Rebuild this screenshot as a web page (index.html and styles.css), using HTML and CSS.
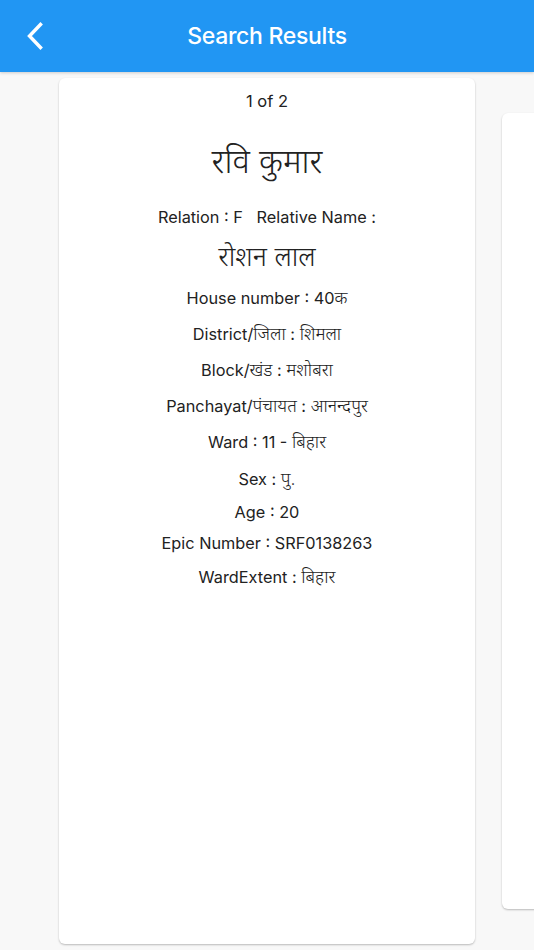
FILE: index.html
```html
<!DOCTYPE html>
<html lang="hi">
<head>
<meta charset="utf-8">
<title>Search Results</title>
<link rel="stylesheet" href="styles.css">
</head>
<body>
<header class="appbar">
  <button class="back" aria-label="Back">
    <svg width="18" height="28" viewBox="0 0 18 28"><path d="M14.5 2.5 L3.5 14 L14.5 25.5" fill="none" stroke="#fff" stroke-width="3.4" stroke-linecap="square" stroke-linejoin="miter"/></svg>
  </button>
  <h1 class="title">Search Results</h1>
</header>
<main class="carousel">
  <section class="card">
    <div class="count">1 of 2</div>
    <div class="name">रवि कुमार</div>
    <div class="row rel">Relation : F &nbsp; Relative Name :</div>
    <div class="relname">रोशन लाल</div>
    <div class="row">House number : 40<span class="hi">क</span></div>
    <div class="row">District/<span class="hi">जिला</span> : <span class="hi">शिमला</span></div>
    <div class="row">Block/<span class="hi">खंड</span> : <span class="hi">मशोबरा</span></div>
    <div class="row">Panchayat/<span class="hi">पंचायत</span> : <span class="hi">आनन्दपुर</span></div>
    <div class="row">Ward : 11 - <span class="hi">बिहार</span></div>
    <div class="row sex">Sex : <span class="hi">पु.</span></div>
    <div class="row age">Age : 20</div>
    <div class="row epic">Epic Number : SRF0138263</div>
    <div class="row ext">WardExtent : <span class="hi">बिहार</span></div>
  </section>
  <section class="card next"></section>
</main>
</body>
</html>
```
FILE: styles.css
```css
html, body {
  margin: 0;
  padding: 0;
}
body {
  width: 534px;
  height: 950px;
  overflow: hidden;
  background: #f8f8f8;
  font-family: Inter, "Noto Sans", "Noto Sans Devanagari", sans-serif;
  color: #222;
}
.appbar {
  height: 72px;
  background: #2196f3;
  display: flex;
  align-items: center;
  justify-content: center;
  position: relative;
  box-shadow: 0 1px 3px rgba(0,0,0,0.18);
  z-index: 2;
}
.back {
  position: absolute;
  left: 26px;
  top: 22px;
  background: none;
  border: 0;
  padding: 0;
  width: 18px;
  height: 28px;
}
.title {
  margin: 0;
  color: #fff;
  font-size: 23px;
  font-weight: 500;
  letter-spacing: -0.3px;
}
.carousel {
  display: flex;
  align-items: center;
  gap: 27px;
  padding: 6px 0 6px 59px;
  height: 866px;
  overflow: hidden;
}
.card {
  flex: 0 0 416px;
  height: 866px;
  background: #fff;
  border-radius: 6px;
  box-shadow: 0 1px 2px rgba(0,0,0,0.25);
  display: flex;
  flex-direction: column;
  align-items: center;
  box-sizing: border-box;
  padding-top: 0;
}
.card.next {
  height: 796px;
}
.count {
  font-size: 16.5px;
  line-height: 46px;
}
.name {
  font-size: 33px;
  line-height: 44px;
  margin-top: 15px;
  font-weight: 300;
}
.row {
  font-size: 16.3px;
  line-height: 24px;
  margin-top: 12px;
}
.hi {
  font-size: 17.8px;
  font-weight: 300;
}
.rel {
  margin-top: 22px;
}
.relname {
  font-size: 27px;
  line-height: 34px;
  margin-top: 11px;
  font-weight: 300;
}
.sex {
  margin-top: 13px;
}
.age {
  margin-top: 9px;
}
.epic {
  margin-top: 7px;
}
.ext {
  margin-top: 10px;
}
```
